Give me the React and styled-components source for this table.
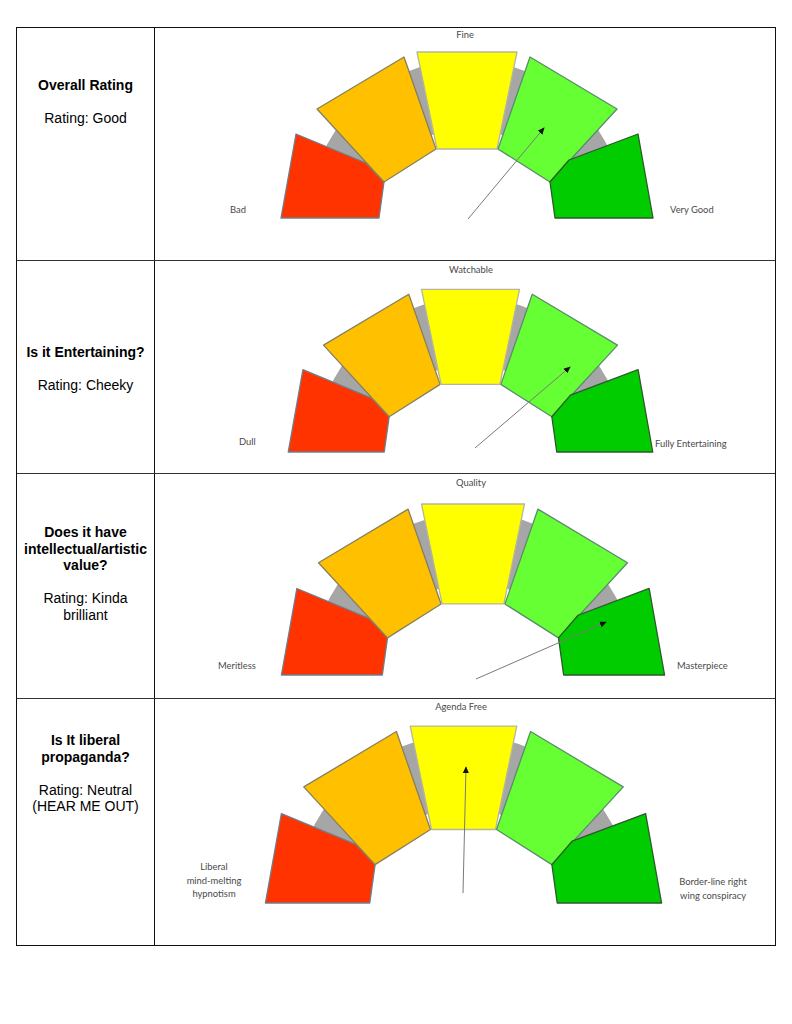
import React from 'react';
import styled, { createGlobalStyle } from 'styled-components';

const GlobalStyle = createGlobalStyle`
  html, body {
    margin: 0;
    padding: 0;
    background: #ffffff;
  }
  body {
    font-family: "Liberation Sans", Arial, sans-serif;
    color: #000;
  }
`;

// sector outlines, drawn around the bottom-centre of the gauge
const SECTORS = [
  {
    fill: '#ff3300',
    stroke: '#6f7f8c',
    pts: [[-186, 0], [-171, -84], [-101, -55], [-83, -36], [-88, 0]],
  },
  {
    fill: '#ffc000',
    stroke: '#86805e',
    pts: [[-150, -109], [-63, -161], [-31, -69], [-83, -36]],
  },
  {
    fill: '#ffff00',
    stroke: '#b5b5a0',
    pts: [[-50, -166], [50, -166], [30, -69], [-30, -69]],
  },
  {
    fill: '#66ff33',
    stroke: '#5a8c6c',
    pts: [[63, -161], [150, -109], [83, -36], [31, -69]],
  },
  {
    fill: '#00cc00',
    stroke: '#2c5a2c',
    pts: [[171, -84], [186, 0], [88, 0], [83, -36], [102, -58]],
  },
];

const rows = [
  {
    top: 28,
    height: 232,
    padTop: 49,
    title: ['Overall Rating'],
    rating: ['Rating: Good'],
    origin: [468, 218],
    scale: 1,
    arrow: [[469, 219], [545, 128]],
    labels: [
      { lines: ['Fine'], x: 466, y: 34, anchor: 'middle' },
      { lines: ['Bad'], x: 247, y: 209, anchor: 'end' },
      { lines: ['Very Good'], x: 671, y: 209, anchor: 'start' },
    ],
  },
  {
    top: 261,
    height: 212,
    padTop: 83,
    title: ['Is it Entertaining?'],
    rating: ['Rating: Cheeky'],
    origin: [471.5, 452],
    scale: 0.98,
    arrow: [[476, 448], [571, 367]],
    labels: [
      { lines: ['Watchable'], x: 472, y: 269, anchor: 'middle' },
      { lines: ['Dull'], x: 240, y: 441, anchor: 'start' },
      { lines: ['Fully Entertaining'], x: 656, y: 443, anchor: 'start' },
    ],
  },
  {
    top: 474,
    height: 224,
    padTop: 50,
    title: ['Does it have', 'intellectual/artistic', 'value?'],
    rating: ['Rating: Kinda', 'brilliant'],
    origin: [474, 675],
    scale: 1.03,
    arrow: [[477, 679], [607, 622]],
    labels: [
      { lines: ['Quality'], x: 472, y: 482, anchor: 'middle' },
      { lines: ['Meritless'], x: 219, y: 665, anchor: 'start' },
      { lines: ['Masterpiece'], x: 678, y: 665, anchor: 'start' },
    ],
  },
  {
    top: 699,
    height: 246,
    padTop: 33,
    title: ['Is It liberal', 'propaganda?'],
    rating: ['Rating: Neutral', '(HEAR ME OUT)'],
    origin: [464.5, 903],
    scale: 1.065,
    arrow: [[464, 893], [467, 767]],
    labels: [
      { lines: ['Agenda Free'], x: 462, y: 706, anchor: 'middle' },
      { lines: ['Liberal', 'mind-melting', 'hypnotism'], x: 215, y: 866, anchor: 'middle' },
      { lines: ['Border-line right', 'wing conspiracy'], x: 714, y: 881, anchor: 'middle' },
    ],
  },
];

const CELL_LEFT = 156;
const CELL_WIDTH = 619;

const Gauge = ({ row, id }) => {
  const [ox, oy] = row.origin;
  const [tail, head] = row.arrow;
  return (
    <GaugeSvg
      viewBox={`${CELL_LEFT} ${row.top} ${CELL_WIDTH} ${row.height}`}
      width={CELL_WIDTH}
      height={row.height}
    >
      <defs>
        <marker
          id={`head-${id}`}
          viewBox="0 0 8 8"
          refX="7"
          refY="4"
          markerWidth="7"
          markerHeight="7"
          markerUnits="userSpaceOnUse"
          orient="auto"
        >
          <path d="M0 0.5 L8 4 L0 7.5 Z" fill="#111" />
        </marker>
      </defs>
      <g transform={`translate(${ox} ${oy}) scale(${row.scale})`}>
        <path
          d="M -158 0 A 158 158 0 0 1 158 0 L 90 0 A 90 90 0 0 0 -90 0 Z"
          fill="#a6a6a6"
        />
        {SECTORS.map((s, i) => (
          <polygon
            key={i}
            points={s.pts.map(p => p.join(',')).join(' ')}
            fill={s.fill}
            stroke={s.stroke}
            strokeWidth="1.3"
            strokeLinejoin="round"
            vectorEffect="non-scaling-stroke"
          />
        ))}
      </g>
      <line
        x1={tail[0]}
        y1={tail[1]}
        x2={head[0]}
        y2={head[1]}
        stroke="#7a7a7a"
        strokeWidth="1"
        markerEnd={`url(#head-${id})`}
      />
      {row.labels.map((l, i) => (
        <GaugeLabel key={i} x={l.x} y={l.y} textAnchor={l.anchor} dominantBaseline="central">
          {l.lines.map((t, j) => (
            <tspan key={j} x={l.x} dy={j === 0 ? 0 : 13.5}>
              {t}
            </tspan>
          ))}
        </GaugeLabel>
      ))}
    </GaugeSvg>
  );
};

const App = () => {
  return (
    <Page>
      <GlobalStyle />
      <Table>
        {rows.map((row, i) => (
          <Row key={i} $first={i === 0} $height={row.height}>
            <QuestionCell $padTop={row.padTop}>
              {row.title.map((t, j) => (
                <Title key={j}>{t}</Title>
              ))}
              <Spacer />
              {row.rating.map((t, j) => (
                <RatingLine key={j}>{t}</RatingLine>
              ))}
            </QuestionCell>
            <GaugeCell>
              <Gauge row={row} id={i} />
            </GaugeCell>
          </Row>
        ))}
      </Table>
    </Page>
  );
};

export default App;

const Page = styled.div`
  padding: 27px 0 0 16px;
  width: 792px;
  height: 1024px;
  box-sizing: border-box;
`;

const Table = styled.div`
  width: 760px;
  box-sizing: border-box;
  border: 1px solid #111;
  display: flex;
  flex-direction: column;
`;

const Row = styled.div`
  display: grid;
  grid-template-columns: 138px 1fr;
  height: ${p => p.$height}px;
  border-top: ${p => (p.$first ? 'none' : '1px solid #333')};
`;

const QuestionCell = styled.div`
  border-right: 1px solid #111;
  padding: ${p => p.$padTop}px 4px 0;
  text-align: center;
  font-size: 14px;
  line-height: 16.5px;
`;

const Title = styled.div`
  font-weight: bold;
`;

const Spacer = styled.div`
  height: 16.5px;
`;

const RatingLine = styled.div`
  font-weight: normal;
`;

const GaugeCell = styled.div`
  overflow: hidden;
`;

const GaugeSvg = styled.svg`
  display: block;
`;

const GaugeLabel = styled.text`
  font-family: Lato, "Open Sans", sans-serif;
  font-size: 9.4px;
  fill: #4a4a4a;
`;
